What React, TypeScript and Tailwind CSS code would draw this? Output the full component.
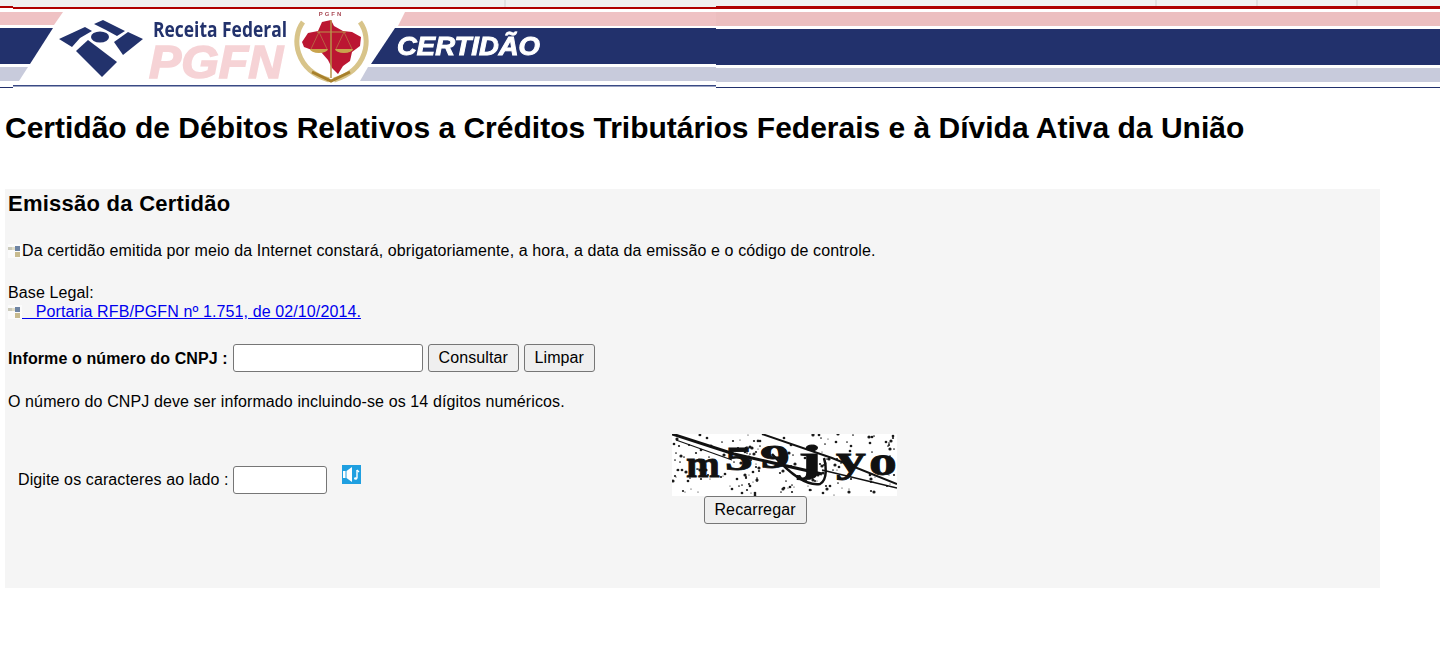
const font = "font-['Liberation_Sans',Arial,sans-serif]";

// deterministic speckle for the captcha
const speckle = Array.from({ length: 210 }, (_, i) => ({
    x: (i * 73 + (i * i) % 37) % 225,
    y: (i * 41 + (i * i * 3) % 29) % 62,
    r: 0.6 + ((i * 7) % 5) * 0.25,
}));

function Banner() {
    return (
        <svg width="716" height="88" viewBox="0 0 716 88" className="block shrink-0">
            <defs>
                <filter id="soft" x="-5%" y="-5%" width="110%" height="110%">
                    <feGaussianBlur stdDeviation="0.35" />
                </filter>
            </defs>
            <rect x="0" y="0" width="716" height="88" fill="#ffffff" />
            <rect x="0" y="0" width="716" height="7" fill="#f0f0f0" />
            <rect x="0" y="6" width="13" height="2" fill="#b00000" />
            <rect x="13" y="7" width="703" height="2" fill="#b00000" />
            <rect x="504" y="0" width="2" height="7" fill="#e0e0e0" />
            <rect x="0" y="8" width="13" height="4" fill="#ffffff" />

            <polygon points="0,12 63,12 54,25 0,25" fill="#efc2c4" />
            <polygon points="0,28 53,28 30,64 0,64" fill="#22316c" />
            <polygon points="0,67 28,67 19,81 0,81" fill="#c8cbdc" />
            <rect x="0" y="87" width="13" height="1" fill="#22316c" />
            <rect x="13" y="85" width="703" height="1.5" fill="#3a4a85" />

            <polygon points="405,12 716,12 716,26 398,26" fill="#efc2c4" />
            <polygon points="395,28 716,28 716,64 371,64" fill="#22316c" />
            <polygon points="368,67 716,67 716,81 360,81" fill="#c8cbdc" />

            <g filter="url(#soft)">
                {/* Receita Federal mark */}
                <g fill="#22316c">
                    <polygon points="59,39 85,27 92,31 80,38 72,47" />
                    <polygon points="94,24 103,20 125,31 117,36 106,30" />
                    <polygon points="114,42 128,32 143,39 123,55" />
                    <polygon points="76,51 88,40 117,62 102,77" />
                    <ellipse cx="100" cy="37" rx="9" ry="5.5" />
                </g>

                <text x="153" y="37" fontFamily="'Open Sans','Liberation Sans',sans-serif" fontSize="22" fontWeight="700" fill="#22316c" textLength="134" lengthAdjust="spacingAndGlyphs">
                    Receita Federal
                </text>
                <text x="149" y="78" fontFamily="'Liberation Sans',sans-serif" fontSize="46" fontWeight="700" fontStyle="italic" fill="#f6d3d6" stroke="#f6d3d6" strokeWidth="1.6" textLength="134" lengthAdjust="spacingAndGlyphs">
                    PGFN
                </text>

                {/* PGFN seal */}
                <text x="331" y="16" textAnchor="middle" fontFamily="'Liberation Sans',sans-serif" fontSize="6" fontWeight="700" letterSpacing="2" fill="#a94a55">
                    PGFN
                </text>
                <path d="M303,22 C291,38 295,70 329,80" fill="none" stroke="#d8c48a" strokeWidth="5" />
                <path d="M360,22 C372,38 368,70 334,80" fill="none" stroke="#d8c48a" strokeWidth="5" />
                <path d="M312,72 L331,81 L350,72" fill="none" stroke="#a8802c" strokeWidth="3" />
                <polygon
                    points="302,42 308,33 318,31 322,22 331,20 334,26 343,31 352,32 361,37 360,46 352,52 350,61 343,66 338,74 332,68 328,60 321,52 312,50 304,47"
                    fill="#bb1533"
                />
                <path d="M331,20 V78" stroke="#b9924a" strokeWidth="1.5" fill="none" />
                <path d="M317,32 H346" stroke="#b9924a" strokeWidth="1" fill="none" />
                <path d="M310,49 a9,4 0 0 0 18,0 z M335,49 a9,4 0 0 0 18,0 z" fill="#c9a44e" />
                <path d="M319,32 L311,49 M319,32 L327,49 M344,32 L336,49 M344,32 L352,49" stroke="#b9924a" strokeWidth="0.6" fill="none" />

                <text x="397" y="55" fontFamily="'Liberation Sans',sans-serif" fontSize="25" fontWeight="700" fontStyle="italic" fill="#ffffff" stroke="#ffffff" strokeWidth="0.9" textLength="143" lengthAdjust="spacingAndGlyphs">
                    CERTIDÃO
                </text>
            </g>
        </svg>
    );
}

function Bullet() {
    return (
        <svg width="14" height="14" viewBox="0 0 14 14" className="shrink-0">
            <rect width="14" height="14" fill="#fbfbfb" />
            <rect x="0" y="3" width="4" height="3" fill="#cbcabb" />
            <rect x="4" y="3" width="3" height="3" fill="#e2dfca" />
            <rect x="7" y="2" width="5" height="5" fill="#6f85a3" />
            <rect x="7" y="8" width="5" height="5" fill="#c8bb8f" />
        </svg>
    );
}

function SpeakerIcon() {
    return (
        <svg width="19" height="19" viewBox="0 0 19 19" className="block">
            <rect width="19" height="19" fill="#1f9fe0" />
            <rect x="1" y="6" width="2.5" height="7" fill="#ffffff" />
            <polygon points="4.5,6 10,2 10,17 4.5,13" fill="#ffffff" />
            <path d="M15,5 V13" stroke="#ffffff" strokeWidth="1.4" />
            <path d="M15,5 L17,7" stroke="#ffffff" strokeWidth="1.2" />
            <ellipse cx="13.7" cy="13.5" rx="1.7" ry="1.3" fill="#ffffff" />
        </svg>
    );
}

function Captcha() {
    return (
        <svg width="225" height="62" viewBox="0 0 225 62" className="block">
            <rect width="225" height="62" fill="#ffffff" />
            {speckle.map((d, i) => (
                <circle key={i} cx={d.x} cy={d.y} r={d.r} fill="#1a1a1a" />
            ))}
            <g fontFamily="'Liberation Serif',serif" fontWeight="700" fill="#111111" stroke="#111111" strokeWidth="0.8">
                <text x="14" y="43" fontSize="38" textLength="34" lengthAdjust="spacingAndGlyphs">m</text>
                <text x="53" y="36" fontSize="34" textLength="28" lengthAdjust="spacingAndGlyphs">5</text>
                <text x="88" y="34" fontSize="34" textLength="30" lengthAdjust="spacingAndGlyphs">9</text>
                <text x="126" y="38" fontSize="38" textLength="24" lengthAdjust="spacingAndGlyphs">j</text>
                <text x="164" y="38" fontSize="38" textLength="30" lengthAdjust="spacingAndGlyphs">y</text>
                <text x="197" y="41" fontSize="40" textLength="28" lengthAdjust="spacingAndGlyphs">o</text>
            </g>
            <path d="M0,0 L62,20 L150,40" stroke="#111111" strokeWidth="3" fill="none" />
            <path d="M4,6 L60,26" stroke="#111111" strokeWidth="1.2" fill="none" />
            <path d="M90,0 L160,24 L225,50" stroke="#111111" strokeWidth="2" fill="none" />
            <path d="M100,20 C120,42 135,52 148,50 C156,46 154,30 152,24" stroke="#111111" strokeWidth="2.5" fill="none" />
            <path d="M150,36 L225,54" stroke="#111111" strokeWidth="1.5" fill="none" />
        </svg>
    );
}

const buttonClass =
    'h-7 rounded-[3px] border border-[#767676] bg-[#efefef] text-[16px] leading-none text-black';

export default function App() {
    return (
        <div className={`h-[648px] overflow-hidden bg-white text-black ${font}`}>
            <header className="flex h-[88px] bg-white">
                <Banner />
                <div className="flex min-w-0 flex-1 flex-col">
                    <div className="flex h-[6px] bg-[#f0f0f0]">
                        <div className="w-[441px] border-r-2 border-[#e0e0e0]" />
                        <div className="w-[101px] border-r-2 border-[#e0e0e0]" />
                        <div className="w-[100px] border-r-2 border-[#e0e0e0]" />
                    </div>
                    <div className="h-[3px] bg-[#b00000]" />
                    <div className="mt-[3px] h-[14px] bg-[#ecbfc0]" />
                    <div className="mt-[3px] h-[36px] bg-[#22316c]" />
                    <div className="mt-[3px] h-[14px] bg-[#c8cbdc]" />
                    <div className="mt-[5px] h-px bg-[#22316c]" />
                </div>
            </header>

            <h1 className="mt-[22px] ml-[5px] text-[30px] leading-[36px] font-bold whitespace-nowrap">
                Certidão de Débitos Relativos a Créditos Tributários Federais e à Dívida Ativa da União
            </h1>

            <main className="mt-[43px] ml-[5px] h-[399px] w-[1375px] bg-[#f5f5f5] pt-[2px] pl-[3px] text-[16px] leading-[19px] tracking-[0.11px]">
                <h2 className="text-[22px] leading-[26px] font-bold tracking-[0.25px]">Emissão da Certidão</h2>

                <p className="mt-[24px] flex items-center">
                    <Bullet />
                    Da certidão emitida por meio da Internet constará, obrigatoriamente, a hora, a data da emissão e o código de controle.
                </p>

                <p className="mt-[23px]">Base Legal:</p>
                <p className="flex items-center">
                    <Bullet />
                    <a className="whitespace-pre text-[#0000ee] underline">{'   Portaria RFB/PGFN nº 1.751, de 02/10/2014.'}</a>
                </p>

                <form className="mt-[23px] flex h-7 items-center">
                    <label className="font-bold">Informe o número do CNPJ :</label>
                    <input className="ml-[5px] h-7 w-[190px] rounded-[3px] border border-[#767676] bg-white" />
                    <button type="button" className={`ml-[5px] w-[91px] ${buttonClass}`}>Consultar</button>
                    <button type="button" className={`ml-[5px] w-[71px] ${buttonClass}`}>Limpar</button>
                </form>

                <p className="mt-[20px]">O número do CNPJ deve ser informado incluindo-se os 14 dígitos numéricos.</p>

                <div className="mt-[23px] flex items-start">
                    <label className="mt-[36px] ml-[10px]">Digite os caracteres ao lado :</label>
                    <input className="mt-[32px] ml-[4px] h-7 w-[94px] rounded-[3px] border border-[#767676] bg-white" />
                    <div className="mt-[31px] ml-[15px]">
                        <SpeakerIcon />
                    </div>
                    <div className="ml-[311px]">
                        <Captcha />
                        <button type="button" className={`ml-[32px] w-[103px] ${buttonClass}`}>Recarregar</button>
                    </div>
                </div>
            </main>
        </div>
    );
}
